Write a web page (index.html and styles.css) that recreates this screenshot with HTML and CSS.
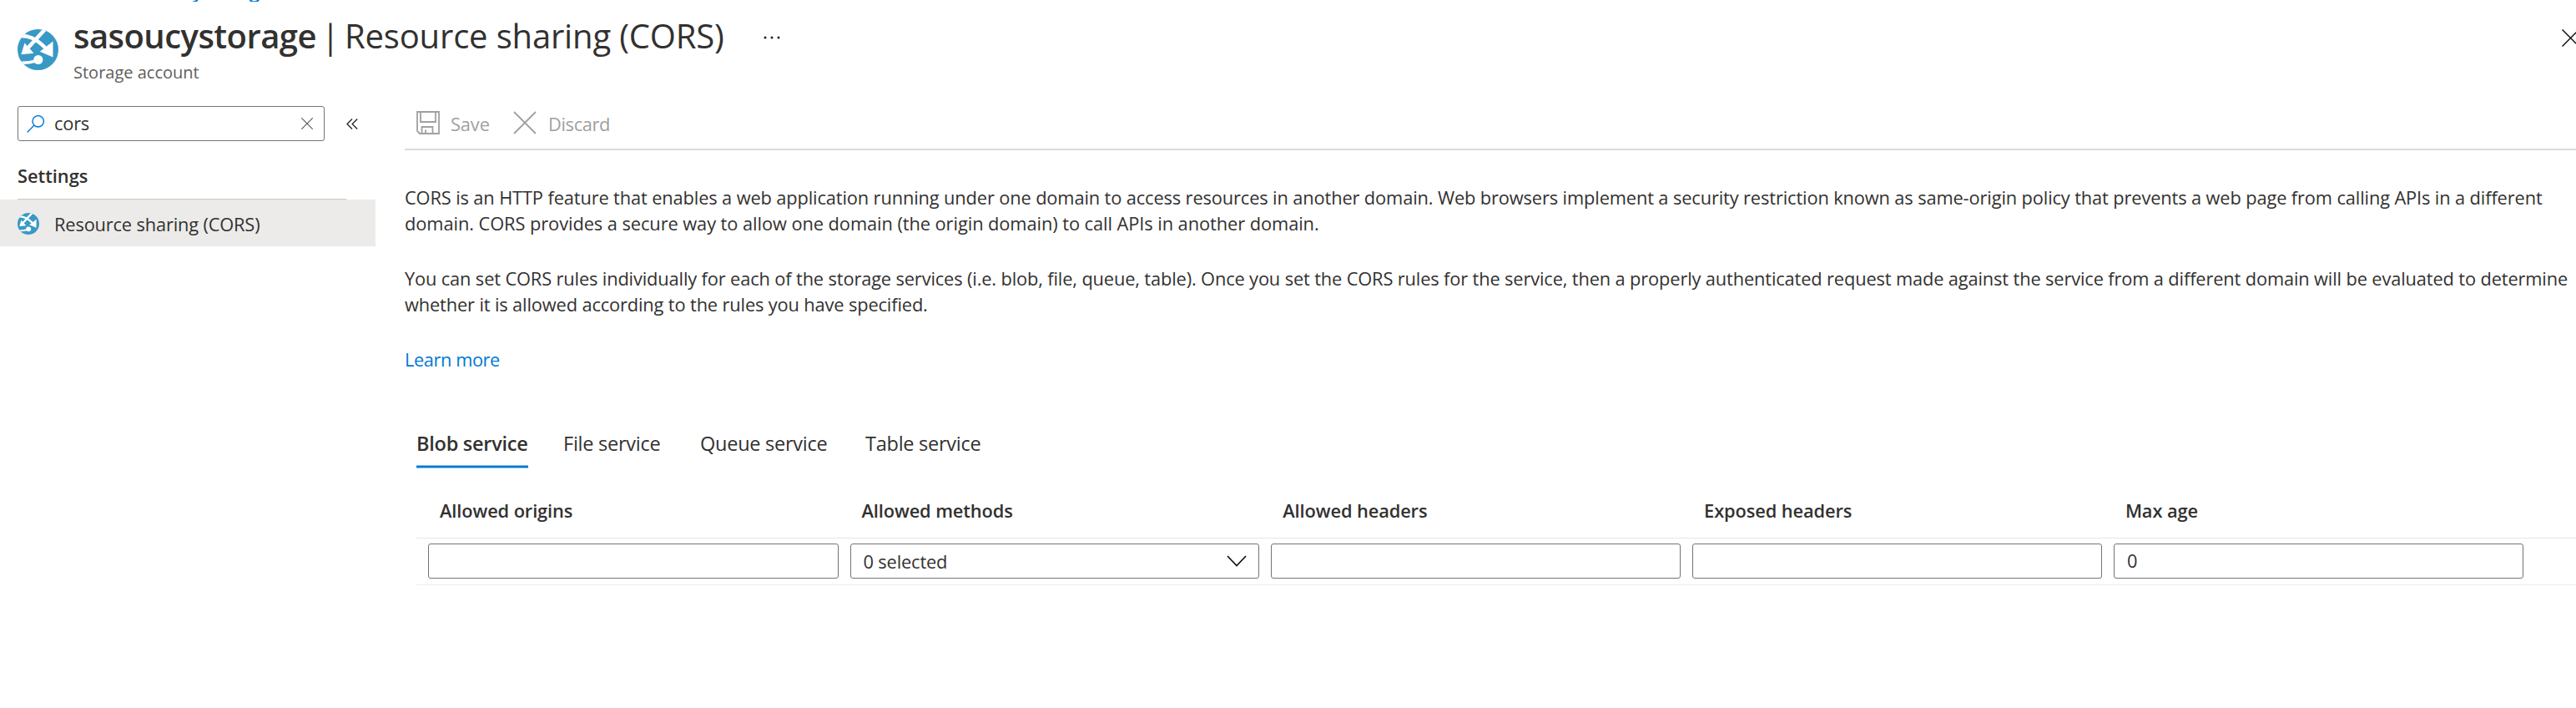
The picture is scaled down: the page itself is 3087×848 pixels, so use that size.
FILE: index.html
```html
<!DOCTYPE html>
<html lang="en">
<head>
<meta charset="utf-8">
<title>sasoucystorage | Resource sharing (CORS)</title>
<link rel="stylesheet" href="styles.css">
</head>
<body>
<svg class="defs" aria-hidden="true">
  <symbol id="cors" viewBox="0 0 49 49">
    <clipPath id="disc"><circle cx="24.5" cy="24.5" r="24.5"/></clipPath>
    <g clip-path="url(#disc)">
      <rect width="49" height="49" fill="#3999c6"/>
      <path d="M34 -1 11 24M0 8C12 7 22 10 36 25" fill="none" stroke="#fff" stroke-width="4.6"/>
      <path d="M8.5 16.5 4.3 30.2 19.5 28.8ZM42.5 14.5V33.5L26.8 26.8Z" fill="#fff"/>
      <path d="M2 40Q11 41 22 38" fill="none" stroke="#fff" stroke-width="3.6"/>
      <circle cx="24.8" cy="36.5" r="5.6" fill="#fff"/>
    </g>
  </symbol>
</svg>
<nav class="crumb"><span>sasoucystorage</span></nav>
<header class="head">
  <svg class="head-icon"><use href="#cors"/></svg>
  <div class="head-text">
    <h1 class="title"><b>sasoucystorage</b><span class="bar">|</span><span class="page">Resource sharing (CORS)</span></h1>
    <p class="subtitle">Storage account</p>
  </div>
  <svg class="more" viewBox="0 0 20 4"><circle cx="2" cy="2" r="1.5"/><circle cx="10" cy="2" r="1.5"/><circle cx="18" cy="2" r="1.5"/></svg>
  <svg class="close" viewBox="0 0 21 21"><path d="M.5.5l20 20M20.5.5l-20 20"/></svg>
</header>
<div class="body">
  <aside class="side">
    <div class="search-row">
      <div class="search">
        <svg class="glass" viewBox="0 0 21 21"><circle cx="13.7" cy="7.3" r="6.7"/><path d="M9 12 .6 20.4"/></svg>
        <span class="query">cors</span>
        <svg class="clear" viewBox="0 0 14 14"><path d="M.3.3l13.4 13.4M13.7.3.3 13.7"/></svg>
      </div>
      <svg class="collapse" viewBox="0 0 14 13"><path d="M7 .5 1 6.5l6 6M13.2.5l-6 6 6 6"/></svg>
    </div>
    <h2 class="group">Settings</h2>
    <a class="item"><svg class="item-icon"><use href="#cors"/></svg><span>Resource sharing (CORS)</span></a>
  </aside>
  <main class="main">
    <div class="toolbar">
      <svg class="tool" viewBox="0 0 28 28"><path d="M1 1H27V27H4L1 24ZM5 1V13H23V1M6.5 27V19H19.5V27M11 27V22.5"/></svg>
      <span class="save">Save</span>
      <svg class="tool" viewBox="0 0 28 28"><path d="M1 1l26 26M27 1 1 27"/></svg>
      <span class="discard">Discard</span>
    </div>
    <p class="para first">CORS is an HTTP feature that enables a web application running under one domain to access resources in another domain. Web browsers implement a security restriction known as same-origin policy that prevents a web page from calling APIs in a different<br><span class="loose">domain. CORS provides a secure way to allow one domain (the origin domain) to call APIs in another domain.</span></p>
    <p class="para">You can set CORS rules individually for each of the storage services (i.e. blob, file, queue, table). Once you set the CORS rules for the service, then a properly authenticated request made against the service from a different domain will be evaluated to determine<br>whether it is allowed according to the rules you have specified.</p>
    <a class="learn">Learn more</a>
    <div class="tabs">
      <span class="tab active">Blob service</span><span class="tab file">File service</span><span class="tab queue">Queue service</span><span class="tab">Table service</span>
    </div>
    <div class="grid">
      <div class="row labels"><span>Allowed origins</span><span>Allowed methods</span><span>Allowed headers</span><span>Exposed headers</span><span>Max age</span></div>
      <div class="row fields">
        <div class="field"></div>
        <div class="field select"><span>0 selected</span><svg class="chev" viewBox="0 0 24 14"><path d="M1 1l11 11.5L23 1"/></svg></div>
        <div class="field"></div>
        <div class="field"></div>
        <div class="field age"><span>0</span></div>
      </div>
    </div>
  </main>
</div>
</body>
</html>
```
FILE: styles.css
```css
* { box-sizing: border-box; }
body {
  margin: 0;
  height: 848px;
  overflow: hidden;
  background: #fff;
  color: #323130;
  font: 21.8px/31px "Open Sans", "Noto Sans", sans-serif;
}
h1, h2, p { margin: 0; }
svg { display: block; flex: none; }
.defs { position: absolute; width: 0; height: 0; }

.crumb { height: 2px; overflow: hidden; padding-left: 157px; color: #0078d4; font-weight: 600; font-size: 22.4px; }
.crumb span { display: block; margin-top: -26px; }

.head { display: flex; height: 97px; padding: 17px 0 0 21px; }
.head-icon { width: 49px; height: 49px; margin-top: 16px; }
.head-text { margin-left: 18px; width: 781px; }
.title { display: flex; font-size: 40px; line-height: 48px; font-weight: 400; white-space: nowrap; }
.title b { font-weight: 600; width: 303px; letter-spacing: -.55px; }
.bar { width: 22px; margin-left: -6px; }
.page { margin-left: 6px; letter-spacing: -.17px; }
.subtitle { margin-top: 7px; font-size: 20px; line-height: 26px; color: #605e5c; }
.more { width: 20px; height: 4px; margin: 24px 0 0 46px; fill: #222; }
.close { width: 21px; height: 21px; margin: 16px -4px 0 auto; fill: none; stroke: #111; stroke-width: 1.5; }

.body { display: flex; }
.side { width: 450px; padding-top: 28px; flex: none; }
.search-row { display: flex; align-items: center; padding-left: 21px; }
.search { display: flex; align-items: center; width: 368px; height: 42px; border: 1px solid #767472; border-radius: 3px; padding: 0 13px 0 10px; }
.glass { width: 21px; height: 21px; fill: none; stroke: #0078d4; stroke-width: 1.4; }
.query { margin: -1px auto 0 12px; letter-spacing: -.2px; }
.clear { width: 14px; height: 14px; fill: none; stroke: #555; stroke-width: 1.1; }
.collapse { width: 14px; height: 13px; margin: 1px 0 0 26px; fill: none; stroke: #222; stroke-width: 1.3; }
.group { margin: 25px 35px 0 21px; height: 45px; padding-top: 1px; border-bottom: 1px solid #c8c6c4; font-size: 21.8px; font-weight: 600; }
.item { display: flex; align-items: center; height: 56px; padding-left: 21px; background: #ecebea; }
.item-icon { width: 26px; height: 26px; margin-top: 2px; }
.item span { margin: 2px 0 0 18px; letter-spacing: -.15px; }

.main { flex: 1; min-width: 0; margin-left: 35px; padding-top: 19px; }
.toolbar { display: flex; align-items: center; height: 62px; border-bottom: 2px solid #dadada; padding-left: 14px; color: #a0a0a0; }
.tool { width: 28px; height: 28px; margin-top: -2px; fill: none; stroke: #a0a0a0; stroke-width: 1.8; }
.save { width: 74px; padding-left: 13px; margin-right: 14px; letter-spacing: -.1px; }
.discard { margin-left: 14px; letter-spacing: -.35px; }
.para { margin-top: 35px; white-space: nowrap; letter-spacing: -.13px; }
.para.first { margin-top: 41px; letter-spacing: -.118px; }
.loose { letter-spacing: -.06px; }
.learn { display: block; margin-top: 35px; color: #0078d4; letter-spacing: -.42px; }
.tabs { display: flex; margin-top: 69px; padding-left: 14px; font-size: 23.5px; letter-spacing: -.25px; }
.tab { height: 46px; padding-top: 1px; }
.tab.active { width: 134px; margin-right: 42px; font-weight: 600; background: linear-gradient(#85bfed 25%, #0078d4 25% 75%, #85bfed 75%) bottom / 100% 4px no-repeat; }
.tab.file { width: 164px; }
.tab.queue { width: 198px; }
.grid { margin: 35px 0 0 14px; }
.row { display: grid; grid-template-columns: 491.5px repeat(4, 490.8px); column-gap: 14px; padding-left: 14px; }
.labels { height: 49px; border-bottom: 1px solid #e6e6e6; font-weight: 600; letter-spacing: -.1px; }
.labels span { padding-left: 14px; }
.fields { height: 56px; padding-top: 6px; border-bottom: 1px solid #eee; }
.field { display: flex; align-items: center; height: 42px; border: 1px solid #767472; border-radius: 3px; padding: 0 14px 0 15px; }
.select { justify-content: space-between; letter-spacing: -.15px; }
.chev { width: 24px; height: 14px; fill: none; stroke: #111; stroke-width: 1.7; }
.age span { margin-top: -2px; }
```
